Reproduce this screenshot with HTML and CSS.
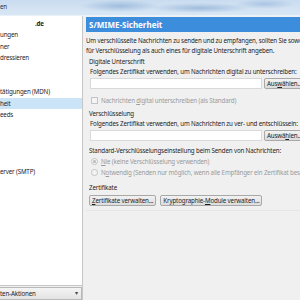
FILE: index.html
```html
<!DOCTYPE html>
<html lang="de">
<head>
    <meta charset="UTF-8">
    <title>Konten-Einstellungen</title>
    <link rel="stylesheet" href="styles.css">
</head>
<body>

    <div class="titlebar"><span class="title-text">en</span></div>

    <div class="window">
        <aside class="sidebar">
            <ul class="tree">
                <li class="account">.de</li>
                <li>ungen</li>
                <li>ner</li>
                <li>dressieren</li>
                <li></li>
                <li></li>
                <li>tätigungen (MDN)</li>
                <li class="selected">heit</li>
                <li>eeds</li>
                <li></li>
                <li></li>
                <li></li>
                <li></li>
                <li>erver (SMTP)</li>
            </ul>
            <div class="actions">ten-Aktionen <span class="arrow">&#9662;</span></div>
        </aside>

        <main class="pane">
            <h1 class="pane-title">S/MIME-Sicherheit</h1>

            <p class="intro">Um verschlüsselte Nachrichten zu senden und zu empfangen, sollten Sie sowohl<br>für Verschlüsselung als auch eines für digitale Unterschrift angeben.</p>

            <section class="group">
                <h2>Digitale Unterschrift</h2>
                <p class="line">Folgendes Zertifikat verwenden, um Nachrichten digital zu unterschreiben:</p>
                <div class="cert-row">
                    <div class="cert-field"></div>
                    <button class="btn">Aus<u>w</u>ählen...</button>
                </div>
                <label class="check disabled"><span class="box"></span><span>Nachrichten <u>d</u>igital unterschreiben (als Standard)</span></label>
            </section>

            <section class="group group-enc">
                <h2>Verschlüsselung</h2>
                <p class="line">Folgendes Zertifikat verwenden, um Nachrichten zu ver- und entschlüsseln:</p>
                <div class="cert-row">
                    <div class="cert-field"></div>
                    <button class="btn">Auswä<u>h</u>len...</button>
                </div>
                <h2 class="sub">Standard-Verschlüsselungseinstellung beim Senden von Nachrichten:</h2>
                <label class="radio disabled"><span class="dot checked"></span><span><u>N</u>ie (keine Verschlüsselung verwenden)</span></label>
                <label class="radio disabled"><span class="dot"></span><span>N<u>o</u>twendig (Senden nur möglich, wenn alle Empfänger ein Zertifikat bes</span></label>
            </section>

            <section class="group group-certs">
                <h2>Zertifikate</h2>
                <div class="btn-row">
                    <button class="btn"><u>Z</u>ertifikate verwalten...</button>
                    <button class="btn">Kryptographie-<u>M</u>odule verwalten...</button>
                </div>
            </section>
            <div class="separator"></div>
        </main>
    </div>

</body>
</html>
```

FILE: styles.css
```css
body {
    margin: 0;
    width: 300px;
    height: 300px;
    overflow: hidden;
    font-family: "Noto Sans", "Open Sans", sans-serif;
    font-size: 6.2px;
    letter-spacing: -0.15px;
    color: #1e1e1e;
    background: #f0f0f0;
}
.titlebar {
    height: 15px;
    background:
        radial-gradient(ellipse 40px 6px at 120px 6px, rgba(120, 160, 205, 0.55), transparent),
        radial-gradient(ellipse 50px 5px at 200px 8px, rgba(110, 150, 200, 0.5), transparent),
        radial-gradient(ellipse 30px 5px at 265px 4px, rgba(130, 165, 210, 0.45), transparent),
        linear-gradient(#c9dcef, #d9e7f5);
    border-bottom: 1px solid #e9f1f9;
}
.title-text {
    display: block;
    line-height: 13px;
    color: #2a3340;
}
.window {
    display: flex;
    width: 300px;
    height: 284px;
}
.sidebar {
    width: 82px;
    flex-shrink: 0;
    display: flex;
    flex-direction: column;
    border-right: 1px solid #c6c6c6;
}
.tree {
    list-style: none;
    margin: 0;
    padding: 2px 0 0;
    flex: 1;
    background: white;
    border-bottom: 1px solid #c6c6c6;
}
.tree li {
    height: 11.4px;
    line-height: 11.4px;
    white-space: nowrap;
    overflow: hidden;
}
.tree .account {
    font-weight: bold;
    padding-left: 35px;
}
.tree .selected {
    background: #cce4f7;
}
.actions {
    height: 11px;
    line-height: 11px;
    margin-top: 1px;
    position: relative;
    background: linear-gradient(#f4f4f4, #e4e4e4);
    border: 1px solid #b9b9b9;
    border-left: none;
    white-space: nowrap;
}
.arrow {
    position: absolute;
    right: 3px;
    top: 0;
    font-size: 6px;
    color: #444;
}
.pane {
    flex: 1;
    min-width: 0;
    padding: 1px 0 0 3px;
    white-space: nowrap;
    overflow: hidden;
}
.pane-title {
    margin: 0;
    height: 15px;
    line-height: 15px;
    padding-left: 3px;
    font-size: 8px;
    font-weight: bold;
    letter-spacing: 0;
    color: white;
    background: #3c8ddc;
}
p, h2 {
    margin: 0;
    font-weight: normal;
    font-size: inherit;
}
.intro {
    margin-top: 4px;
    line-height: 10px;
}
.group {
    padding-left: 3px;
}
.group h2 {
    line-height: 10px;
    margin-top: 1px;
}
.line {
    line-height: 10px;
    padding-left: 1px;
}
.cert-row {
    display: flex;
    gap: 2px;
    margin-top: 1px;
    height: 11px;
    padding-left: 1px;
    margin-right: -6px;
}
.cert-field {
    flex: 1;
    background: white;
    border: 1px solid #d9d9d9;
}
.btn {
    height: 11px;
    padding: 0 2px;
    font-family: inherit;
    font-size: 6.2px;
    letter-spacing: -0.15px;
    line-height: 9px;
    color: #1e1e1e;
    background: linear-gradient(#f2f2f2, #dcdcdc);
    border: 1px solid #a8a8a8;
    border-radius: 2px;
}
.cert-row .btn {
    width: 42px;
    text-align: left;
}
.check, .radio {
    display: flex;
    align-items: center;
    gap: 3px;
    padding-left: 2px;
}
.check {
    height: 10px;
    margin-top: 6px;
}
.disabled {
    color: #9a9a9a;
}
.box {
    width: 5px;
    height: 5px;
    border: 1px solid #c4c4c4;
    background: #f4f4f4;
}
.group-enc h2:first-child {
    margin-top: 4px;
}
.cert-row + .sub {
    margin-top: 5px;
}
.radio {
    height: 11px;
}
.dot {
    width: 5px;
    height: 5px;
    border: 1px solid #c4c4c4;
    border-radius: 50%;
    background: #f4f4f4;
    display: flex;
    align-items: center;
    justify-content: center;
}
.dot.checked::after {
    content: "";
    width: 3px;
    height: 3px;
    border-radius: 50%;
    background: #b8b8b8;
}
.group-certs h2 {
    margin-top: 5px;
}
.btn-row {
    display: flex;
    gap: 4px;
    margin-top: 2px;
}
.separator {
    margin-top: 4px;
    border-top: 1px solid #e6e6e6;
}
```
